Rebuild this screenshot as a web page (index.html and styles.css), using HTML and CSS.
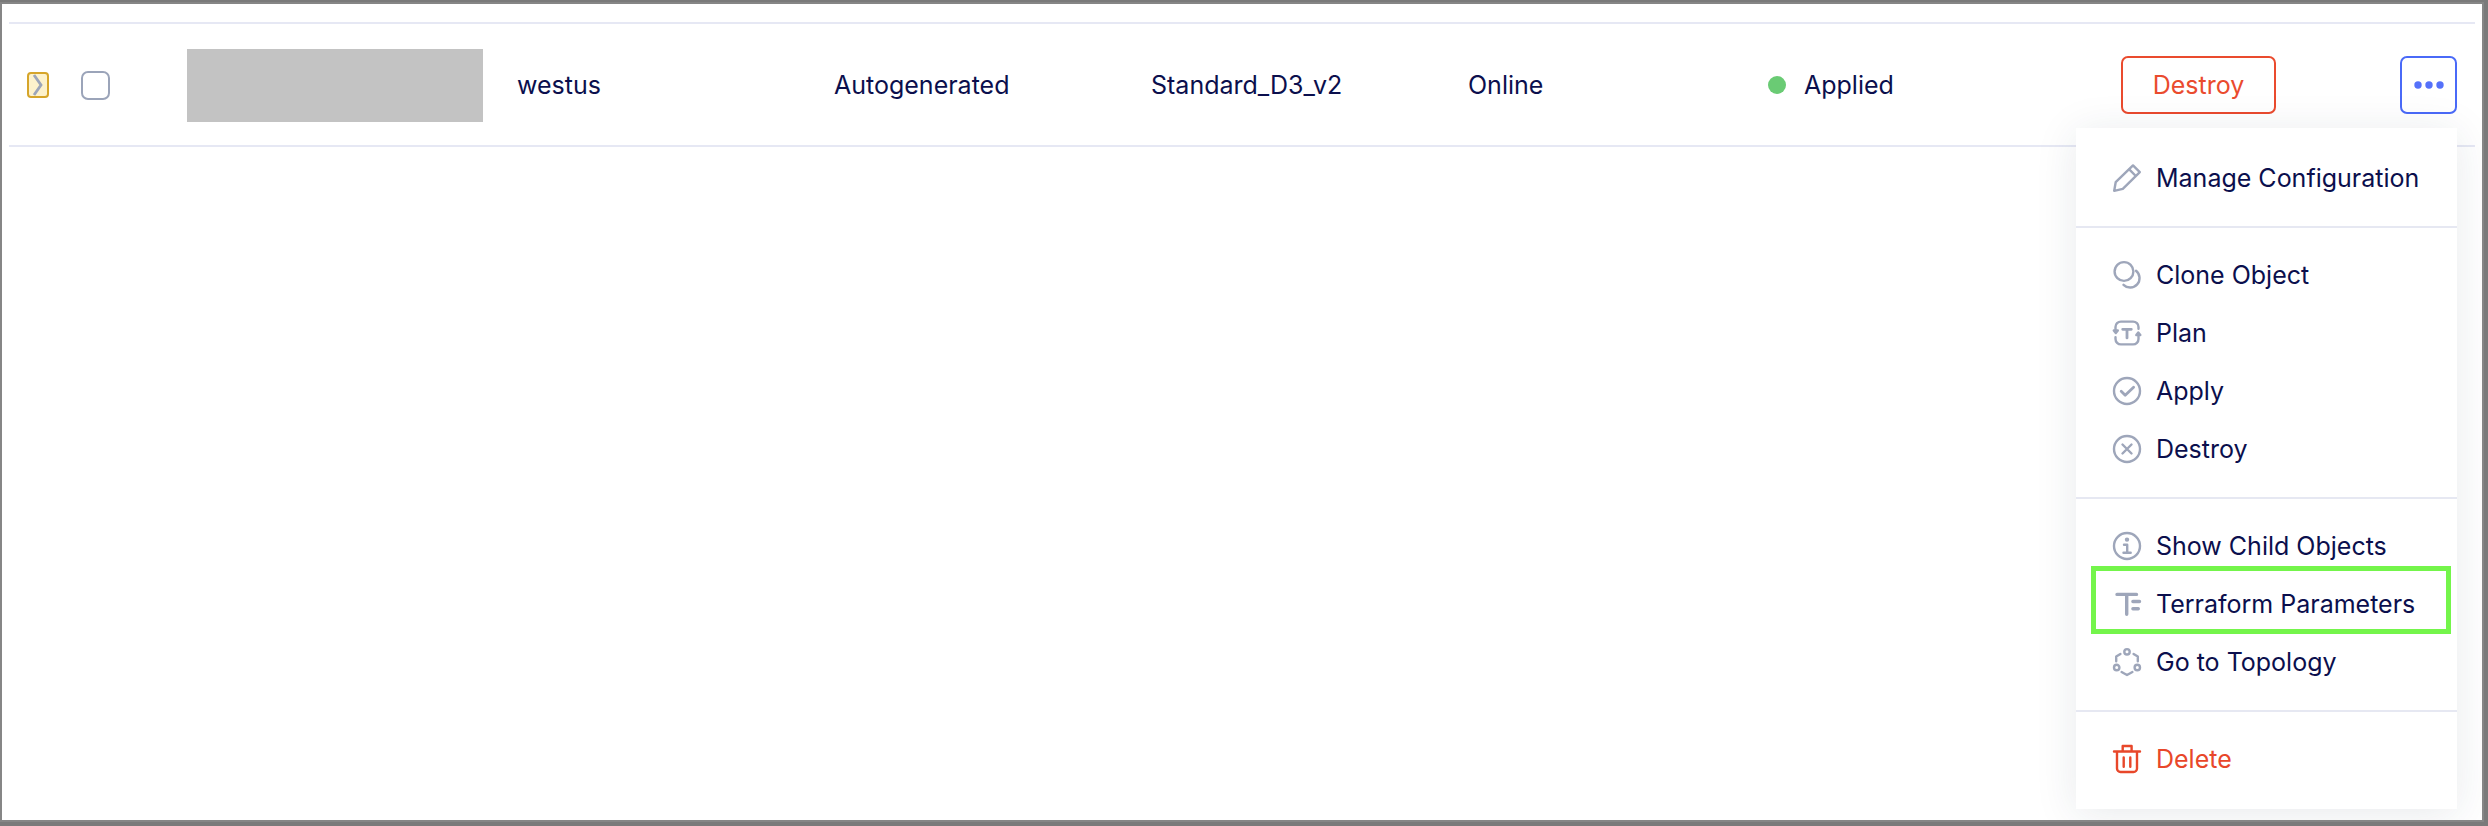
FILE: index.html
```html
<!DOCTYPE html>
<html lang="en">
<head>
  <meta charset="UTF-8">
  <title>Environment Objects</title>
  <link rel="stylesheet" href="styles.css">
</head>
<body>
  <div class="page">
    <table class="objects">
      <colgroup>
        <col class="col-expand">
        <col class="col-check">
        <col class="col-name">
        <col>
        <col>
        <col>
        <col class="col-state">
        <col class="col-status">
        <col class="col-action">
        <col class="col-more">
      </colgroup>
      <tbody>
        <tr>
          <td class="expand-cell">
            <button class="expand" aria-label="Expand row">
              <svg width="18" height="22" viewBox="0 0 18 22"><path d="M5 1l7 10-7 10"/></svg>
            </button>
          </td>
          <td class="check-cell"><input type="checkbox" class="check" aria-label="Select row"></td>
          <td><div class="redacted"></div></td>
          <td>westus</td>
          <td>Autogenerated</td>
          <td>Standard_D3_v2</td>
          <td>Online</td>
          <td><span class="status"><span class="dot"></span>Applied</span></td>
          <td><button class="btn-destroy">Destroy</button></td>
          <td>
            <div class="more">
              <button class="btn-more" aria-label="More actions">
                <svg width="30" height="8" viewBox="0 0 30 8"><circle cx="4" cy="4" r="3.7"/><circle cx="15" cy="4" r="3.7"/><circle cx="26" cy="4" r="3.7"/></svg>
              </button>
              <div class="menu">
                <div class="menu-group">
                  <button class="menu-item">
                    <svg class="icon" viewBox="0 0 28 28"><path d="M1.2 26.8l1.5-8.6L20 1.4l6.8 6.8L9.8 24.8zM16 5.2l6.8 6.8"/></svg>
                    Manage Configuration
                  </button>
                </div>
                <div class="menu-group">
                  <button class="menu-item">
                    <svg class="icon" viewBox="0 0 28 28"><circle cx="11" cy="10.5" r="9.4"/><path d="M23 9.8A9.4 9.4 0 1 1 10.5 23.8"/></svg>
                    Clone Object
                  </button>
                  <button class="menu-item">
                    <svg class="icon" viewBox="0 0 28 28"><path d="M2.5 11V8a5.4 5.4 0 0 1 5.4-5.4h12.2A5.4 5.4 0 0 1 25.5 8v1.7M25.5 17v3a5.4 5.4 0 0 1-5.4 5.4H7.9A5.4 5.4 0 0 1 2.5 20v-1.8"/><path d="M9.7 10.3h8.6M14 10.3v8.6" class="thick"/><path d="M.8 11.5h4l-2 2.5zM23.3 16h4l-2-2.5z"/></svg>
                    Plan
                  </button>
                  <button class="menu-item">
                    <svg class="icon" viewBox="0 0 28 28"><circle cx="14" cy="14" r="13"/><path d="M8.2 14.3l4 4 8.4-8" class="thick"/></svg>
                    Apply
                  </button>
                  <button class="menu-item">
                    <svg class="icon" viewBox="0 0 28 28"><circle cx="14" cy="14" r="13"/><path d="M9.5 9.5l9 9M18.5 9.5l-9 9"/></svg>
                    Destroy
                  </button>
                </div>
                <div class="menu-group">
                  <button class="menu-item">
                    <svg class="icon" viewBox="0 0 28 28"><circle cx="14" cy="14" r="13"/><circle cx="14" cy="7.6" r="1" /><path d="M11 12.7h3.2v8M10.5 20.8h7.2"/></svg>
                    Show Child Objects
                  </button>
                  <button class="menu-item highlighted">
                    <svg class="icon" viewBox="0 0 28 28"><path d="M4 4.4h19.5M13.7 4.4v19.8M19.9 11.5h6.6M19.9 18.8h5.4" class="bold"/></svg>
                    Terraform Parameters
                  </button>
                  <button class="menu-item">
                    <svg class="icon" viewBox="0 0 28 28"><circle cx="14" cy="3.8" r="2.7"/><circle cx="3.7" cy="19.5" r="2.7"/><circle cx="24.3" cy="19.5" r="2.7"/><path d="M7.4 6L3.2 8.6v4.6M20.6 6l4.2 2.6v4.6M8.6 24l5.4 3 5.4-3"/></svg>
                    Go to Topology
                  </button>
                </div>
                <div class="menu-group">
                  <button class="menu-item danger">
                    <svg class="icon" viewBox="0 0 28 28"><path d="M1 6.5h26M9.7 6V1h8.9v5M4 7v16.5A3.5 3.5 0 0 0 7.5 27h13a3.5 3.5 0 0 0 3.5-3.5V7M10.7 12.5v9.3M17.3 12.5v9.3"/></svg>
                    Delete
                  </button>
                </div>
              </div>
            </div>
          </td>
        </tr>
      </tbody>
    </table>
  </div>
</body>
</html>
```
FILE: styles.css
```css
* { box-sizing: border-box; }
body {
  margin: 0;
  min-height: 100vh;
  display: flex;
  padding: 4px 6px 6px 2px;
  background: #7a7a7a;
  font-family: Inter, sans-serif;
  font-size: 25px;
  line-height: 30px;
  color: #0b0f4d;
}
.page {
  flex: 1;
  padding: 18px 7px 0;
  background: white;
  box-shadow: 0 0 0 2px #868686;
  overflow: hidden;
}
button {
  font: inherit;
  cursor: pointer;
}

/* object row */
.objects {
  width: 100%;
  table-layout: fixed;
  border-collapse: collapse;
}
.objects td {
  height: 123px;
  padding: 1px 0 0;
  border-top: 2px solid #e6e8f4;
  border-bottom: 2px solid #e6e8f4;
  vertical-align: middle;
}
.col-expand { width: 72px; }
.col-check { width: 106px; }
.col-name { width: 330px; }
.col-state { width: 300px; }
.col-status { width: 353px; }
.col-action { width: 279px; }
.col-more { width: 75px; }
.objects .expand-cell { padding-left: 18px; }
.expand {
  display: block;
  width: 22px;
  height: 26px;
  padding: 0;
  border: 2px solid #d6a52a;
  border-radius: 4px;
  background: #fdf2cc;
}
.expand svg {
  display: block;
  fill: none;
  stroke: #9ca5b9;
  stroke-width: 2.8;
}
.check {
  appearance: none;
  display: block;
  width: 29px;
  height: 29px;
  margin: 0;
  border: 2px solid #9ba4b9;
  border-radius: 7px;
  background: white;
}
.redacted {
  width: 296px;
  height: 73px;
  background: #c3c3c3;
}
.status {
  display: flex;
  align-items: center;
  gap: 18px;
}
.dot {
  width: 18px;
  height: 18px;
  border-radius: 50%;
  background: #6acb74;
}
.btn-destroy {
  display: block;
  width: 155px;
  height: 58px;
  padding: 0;
  border: 2px solid #ea4b2e;
  border-radius: 7px;
  background: white;
  color: #ea4b2e;
}
.more {
  position: relative;
  width: 57px;
}
.btn-more {
  display: flex;
  align-items: center;
  justify-content: center;
  width: 57px;
  height: 58px;
  padding: 0;
  border: 2px solid #4a6af8;
  border-radius: 7px;
  background: white;
}
.btn-more svg { fill: #5571fa; }

/* actions menu */
.menu {
  position: absolute;
  top: 72px;
  right: 0;
  width: 381px;
  padding: 3px 0 2px;
  background: white;
  box-shadow: 0 5px 40px rgba(30, 50, 70, 0.1);
}
.menu-group {
  padding: 18px 0 19px;
}
.menu-group + .menu-group {
  border-top: 2px solid #e6e8f2;
}
.menu-item {
  position: relative;
  display: flex;
  align-items: center;
  gap: 15px;
  width: 100%;
  height: 58px;
  padding: 0 0 0 37px;
  border: none;
  background: none;
  color: inherit;
  white-space: nowrap;
}
.menu-item.danger { color: #e8472a; }
.icon {
  width: 28px;
  height: 28px;
  flex: none;
  fill: none;
  stroke: #9ea6ba;
  stroke-width: 2.4;
  stroke-linecap: round;
  stroke-linejoin: round;
  overflow: visible;
}
.danger .icon { stroke: currentColor; }
.icon .thick { stroke-width: 2.8; }
.icon .bold { stroke-width: 3.4; }
.highlighted::after {
  content: "";
  position: absolute;
  inset: -9px 6px -1px 15px;
  border: 5px solid #74f54b;
}
```
